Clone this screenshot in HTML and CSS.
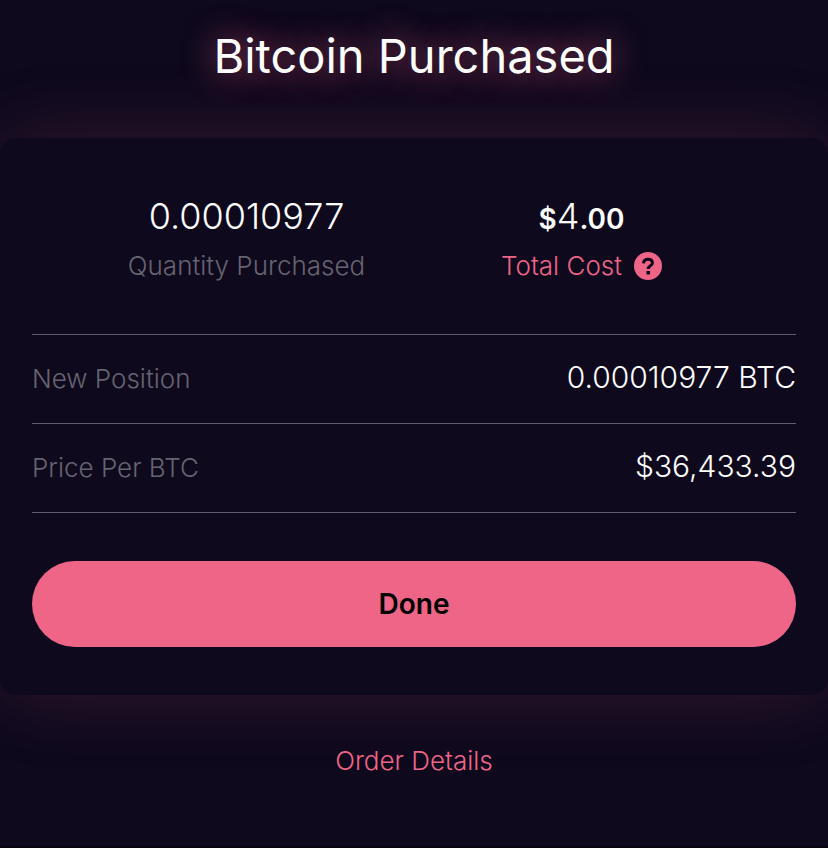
FILE: index.html
```html
<!DOCTYPE html>
<html lang="en">
<head>
  <meta charset="UTF-8" />
  <meta name="viewport" content="width=device-width, initial-scale=1.0" />
  <title>Bitcoin Purchased</title>
  <link rel="stylesheet" href="styles.css">
</head>
<body>
  <h1>Bitcoin Purchased</h1>

  <main class="card">
    <div class="summary">
      <div class="summary-item">
        <div class="amount">0.00010977</div>
        <div class="label">Quantity Purchased</div>
      </div>
      <div class="summary-item">
        <div class="amount"><b>$</b>4<b>.00</b></div>
        <button class="cost-button" type="button">
          Total Cost
          <svg class="help-icon" viewBox="0 0 28 28" aria-hidden="true">
            <circle cx="14" cy="14" r="14" />
            <path d="M9.500 11.400C9.600 8.800 11.400 7.300 14 7.300c2.600 0 4.400 1.400 4.400 3.600 0 3-4.200 2.900-4.200 6.100" />
            <rect x="12.500" y="19" width="3.500" height="3.500" />
          </svg>
        </button>
      </div>
    </div>

    <dl class="details">
      <div class="row">
        <dt>New Position</dt>
        <dd>0.00010977 BTC</dd>
      </div>
      <div class="row">
        <dt>Price Per BTC</dt>
        <dd>$36,433.39</dd>
      </div>
    </dl>

    <button class="done-button" type="button">Done</button>
  </main>

  <a class="order-link" href="#">Order Details</a>
</body>
</html>
```
FILE: styles.css
```css
* {
  box-sizing: border-box;
}

body {
  font-family: Inter, "Liberation Sans", sans-serif;
  margin: 0;
  min-height: 100vh;
  display: flex;
  flex-direction: column;
  background-color: #0e091d;
  border-bottom: 2px solid #06040e;
  color: #fff;
  overflow-x: hidden;
}

h1 {
  margin: 0;
  padding: 28px 0 54px;
  text-align: center;
  font-size: 47px;
  font-weight: 400;
  line-height: 56px;
  text-shadow: 0 0 32px rgba(240, 100, 135, 0.8);
}

.card {
  padding: 56px 32px 48px;
  border-radius: 16px;
  background-color: #0e091d;
  box-shadow: 0 0 80px rgba(240, 100, 135, 0.16);
}

.summary {
  display: grid;
  grid-template-columns: 1fr 1fr;
  padding: 0 47px 50px;
  text-align: center;
}

.amount {
  font-size: 36px;
  font-weight: 300;
  line-height: 44px;
  margin-bottom: 10px;
}

.amount b {
  font-size: 28px;
  font-weight: 600;
  line-height: 1;
}

.label,
.cost-button {
  font-size: 26px;
  font-weight: 300;
  line-height: 36px;
}

.label {
  color: #666470;
}

.cost-button {
  display: flex;
  align-items: center;
  gap: 12px;
  margin: 0 auto;
  padding: 0;
  border: none;
  background: none;
  color: #ee6587;
  font-family: inherit;
  cursor: pointer;
}

.help-icon {
  width: 28px;
  height: 28px;
  fill: #ee6587;
}

.help-icon path {
  fill: none;
  stroke: #0e091d;
  stroke-width: 3;
}

.help-icon rect {
  fill: #0e091d;
}

.details {
  margin: 0 0 48px;
  border-top: 1px solid #5f5d6b;
}

.row {
  display: flex;
  justify-content: space-between;
  align-items: baseline;
  padding: 20px 0 22px;
  border-bottom: 1px solid #5f5d6b;
  line-height: 44px;
}

.row dt {
  font-size: 26px;
  font-weight: 300;
  color: #666470;
}

.row dd {
  margin: 0;
  font-size: 30px;
  font-weight: 300;
}

.done-button {
  display: block;
  width: 100%;
  padding: 23px;
  border: none;
  border-radius: 43px;
  background-color: #ee6587;
  color: #000;
  font-family: inherit;
  font-size: 28px;
  font-weight: 600;
  line-height: 40px;
  cursor: pointer;
}

.order-link {
  align-self: center;
  margin-top: 48px;
  color: #ee6587;
  font-size: 26px;
  font-weight: 300;
  line-height: 36px;
  text-decoration: none;
}
```
